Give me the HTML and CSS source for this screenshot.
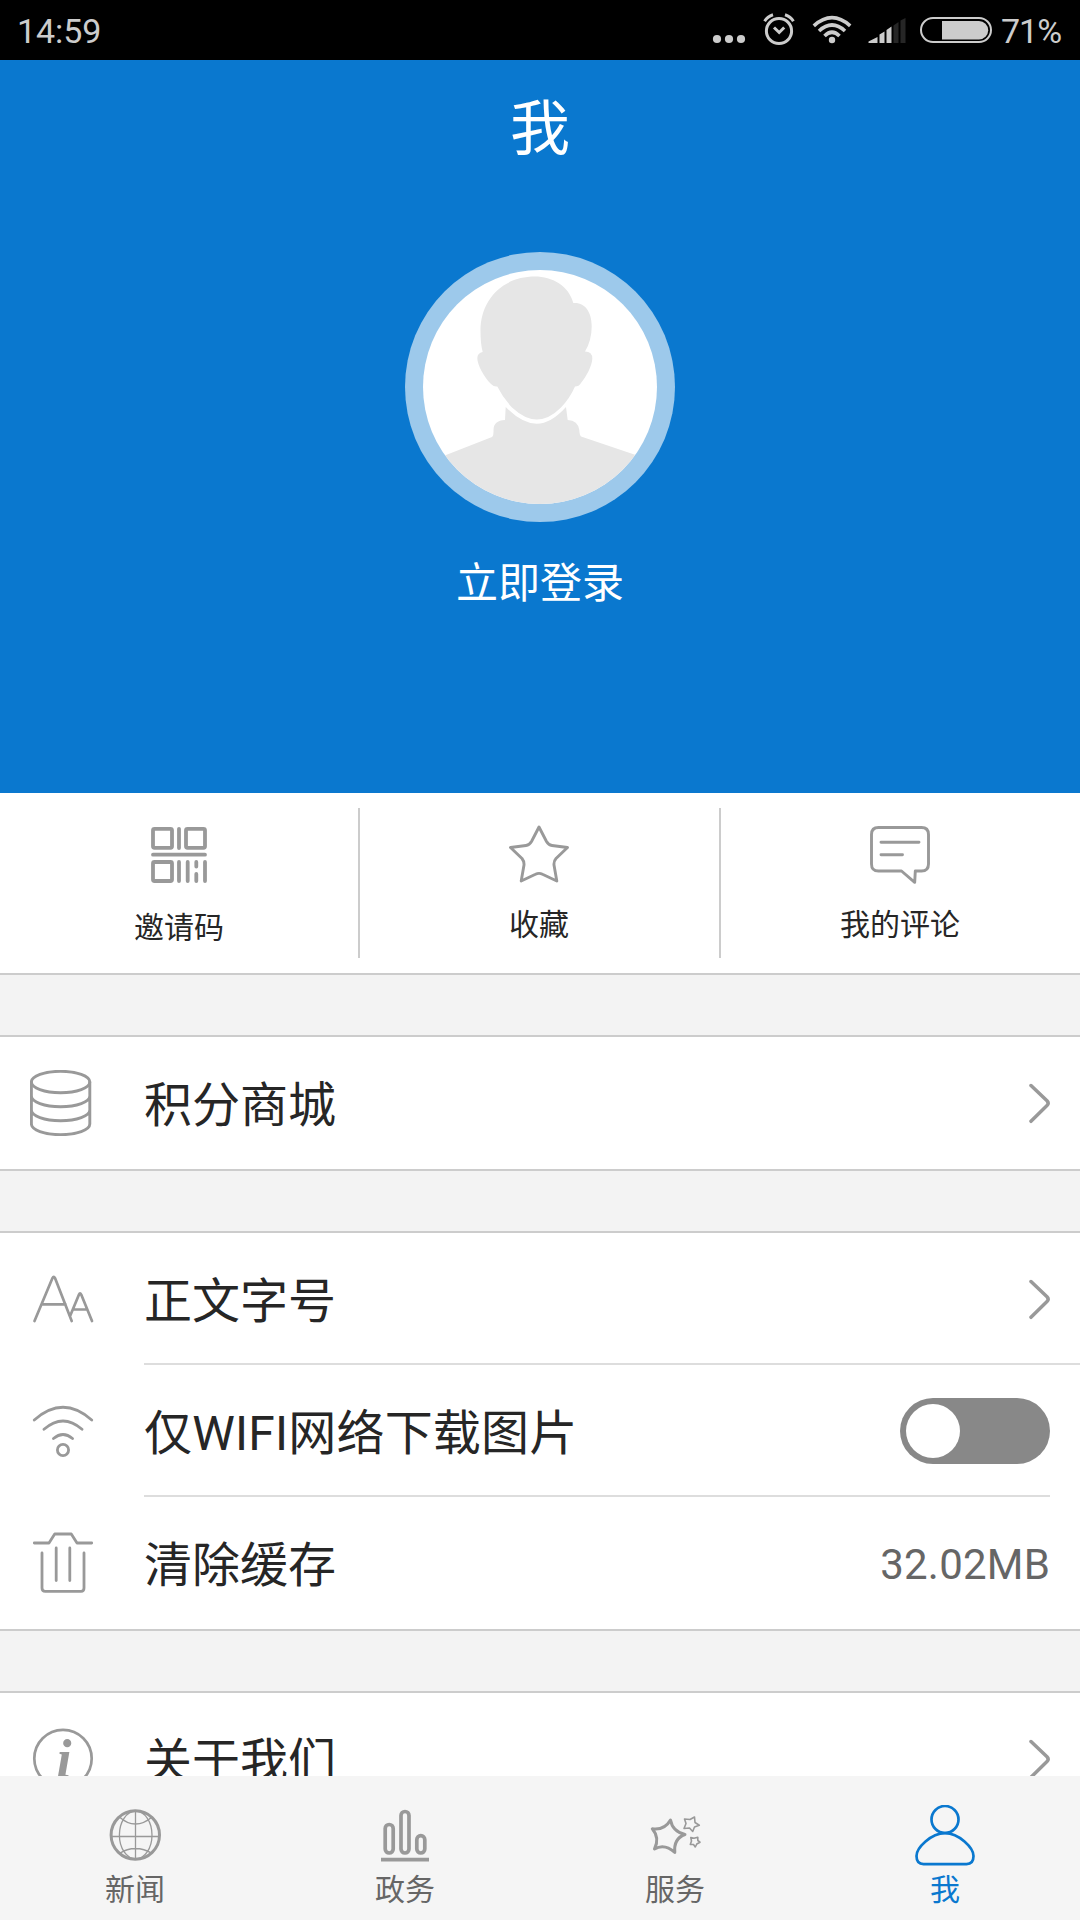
FILE: index.html
```html
<!DOCTYPE html>
<html lang="zh-CN">
<head>
<meta charset="utf-8">
<title>我</title>
<link rel="stylesheet" href="styles.css">
</head>
<body>
<div class="screen">
  <header class="status">
    <span class="time">14:59</span>
    <div class="status-icons">
      <svg width="34" height="60" viewBox="712 0 34 60" class="solid"><circle cx="717" cy="39" r="4.1"/><circle cx="729" cy="39" r="4.1"/><circle cx="741" cy="39" r="4.1"/></svg>
      <svg width="34" height="60" viewBox="762 0 34 60" class="line"><circle cx="779" cy="31" r="12.6"/><path d="M774 27.5l5.2 5 5-5M764.6 21.2Q767.5 16.500 773 14.800M793.400 21.200Q790.500 16.500 785 14.800"/></svg>
      <svg width="40" height="60" viewBox="812 0 40 60" class="line"><path d="M813.800 25.800Q832 9.500 850.200 25.800M819 31Q832 19 845 31M824.500 36Q832 28.500 839.500 36" stroke-width="3.600"/><circle cx="832" cy="40" r="3.200" fill="#ccc" stroke="none"/></svg>
      <svg width="38" height="60" viewBox="868.500 0 38 60" class="solid"><path d="M869 43v-1.500l9-4.500v6zM880 43V34.500l5-3V43zM887 43V30l5-3.500V43z"/><path d="M894 43V25.500l5-3.500V43zM901 43V20.500l5-2.500V43z" fill="#262626"/></svg>
      <svg width="74" height="60" viewBox="920 0 74 60" class="line"><rect x="922" y="18" width="70" height="24" rx="12" stroke-width="2"/><path d="M943 21h37a9.200 9.200 0 0 1 0 18.400h-37z" fill="#ccc" stroke="none"/></svg>
    </div>
    <span class="percent">71%</span>
  </header>

  <section class="profile">
    <h1 class="title">我</h1>
    <svg class="avatar" width="270" height="270" viewBox="0 0 270 270">
      <defs><clipPath id="face"><circle cx="135" cy="135" r="117"/></clipPath></defs>
      <circle cx="135" cy="135" r="135" fill="#9dc9eb"/>
      <circle cx="135" cy="135" r="117" fill="#fff"/>
      <g clip-path="url(#face)" fill="#e6e6e6">
        <path d="M130 24.600C98 24.600 75.500 47 75.500 79Q75.500 92 77.700 100Q72.500 101 72.300 106C72.300 113 79 125 86 132Q89 135 92.300 134.500Q98 146 107 155.500Q120 167.500 131.700 167.500Q144 167.500 156 155.500Q165 146 170 134.500Q174 134.500 176 131C181 125 187 114 187.300 107Q187.500 99.500 180 99.500Q186.800 88 186.700 74C186.700 60 180 50 168.300 51C164 34 147 24.600 130 24.600Z"/>
        <path d="M100.700 155L100 168Q88.500 168.500 88.500 178Q88.700 184 87 185L41 203L0 225V270H270V220L230 202.700L176 184.500Q174.500 183 174.300 178Q173 168.500 162.700 168L161 155Q146 171.700 131.700 171.700Q117 171.700 100.700 155Z"/>
      </g>
    </svg>
    <p class="login">立即登录</p>
  </section>

  <nav class="shortcuts">
    <a class="shortcut shortcut-low">
      <svg class="icon" width="60" height="60" viewBox="0 0 60 60" stroke-width="3.800"><rect x="4" y="4.800" width="19" height="19" rx="1.500"/><rect x="37" y="4.800" width="19" height="19" rx="1.500"/><rect x="4" y="38" width="19" height="19" rx="1.500"/><path d="M30 4.800V24M4 30.700H56M30 38V57M38.700 38V57M47.300 38v4.500M47.300 50v7M56 38V57"/></svg>
      <span>邀请码</span>
    </a>
    <i class="rule"></i>
    <a class="shortcut">
      <svg class="icon" width="60" height="60" viewBox="0 0 60 60" stroke-width="2.900"><path d="M30 3L37.500 17.500Q39.500 21 43 21.500L58.500 23.500L47 34.500Q44.700 37 45 41L47.800 57L33.500 50.300Q30 48.500 26.500 50.300L12.200 57L15 41Q15.300 37.500 13 34.500L1.500 23.500L17 21.500Q20.500 21 22.500 17.500Z"/></svg>
      <span>收藏</span>
    </a>
    <i class="rule"></i>
    <a class="shortcut">
      <svg class="icon" width="60" height="60" viewBox="0 0 60 60" stroke-width="2.900"><path d="M8.500 3.500H51.500Q58.500 3.500 58.500 10.500V40Q58.500 47 51.500 47H45.300L44.700 58.300L31.500 47H8.500Q1.500 47 1.500 40V10.500Q1.500 3.500 8.500 3.500ZM11 18.300H49M11 30.700H32.500"/></svg>
      <span>我的评论</span>
    </a>
  </nav>

  <section class="group">
    <div class="row">
      <svg class="icon" width="66" height="66" viewBox="0 0 66 66" stroke-width="2.900"><ellipse cx="30.600" cy="12" rx="29.200" ry="10.700"/><path d="M1.400 12V54A29.200 10.700 0 0 0 59.800 54V12M1.400 26A29.200 10.700 0 0 0 59.800 26M1.400 40A29.200 10.700 0 0 0 59.800 40"/></svg>
      <span class="label">积分商城</span>
      <svg class="icon" width="22" height="42" viewBox="0 0 22 42" stroke-width="3.500"><path d="M3 3.500L19 18.800Q21.300 21.300 19 23.500L3 39.300"/></svg>
    </div>
  </section>

  <section class="group">
    <div class="row row-mid">
      <svg class="icon" width="66" height="66" viewBox="0 0 66 66" stroke-width="2.700"><path d="M4.500 55L22.500 12Q23.700 9.500 25 12L41.700 55M11.500 38.300H35.500M40.300 49.500L49 28.500Q50 26 51.200 28.500L62 55M43.500 43.500H57"/></svg>
      <span class="label">正文字号</span>
      <svg class="icon" width="22" height="42" viewBox="0 0 22 42" stroke-width="3.500"><path d="M3 3.500L19 18.800Q21.300 21.300 19 23.500L3 39.300"/></svg>
    </div>
    <i class="divider"></i>
    <div class="row row-mid">
      <svg class="icon" width="66" height="66" viewBox="0 0 66 66" stroke-width="2.800"><path d="M4.300 22Q33 -3.400 61.700 22M14 31.300Q33 14.700 52 31.300M23.500 40.500Q33 32.500 42.500 40.500"/><circle cx="33" cy="52" r="5.600"/></svg>
      <span class="label label-wide">仅WIFI网络下载图片</span>
      <span class="toggle"></span>
    </div>
    <i class="divider divider-inset"></i>
    <div class="row">
      <svg class="icon" width="66" height="66" viewBox="0 0 66 66" stroke-width="2.800"><path d="M4.300 13H19L24.700 4H41.300L47 13H61.700M12 23V58Q12 61.300 15.300 61.300H51Q54 61.300 54 58V23M26.200 18V50.500M39.800 18V50.500"/></svg>
      <span class="label">清除缓存</span>
      <span class="value">32.02MB</span>
    </div>
  </section>

  <section class="group">
    <div class="row">
      <svg class="icon" width="66" height="66" viewBox="0 0 66 66" stroke-width="2.700"><circle cx="33" cy="32.500" r="28.700"/><text class="info" x="34" y="50.500" text-anchor="middle">i</text></svg>
      <span class="label">关于我们</span>
      <svg class="icon" width="22" height="42" viewBox="0 0 22 42" stroke-width="3.500"><path d="M3 3.500L19 18.800Q21.300 21.300 19 23.500L3 39.300"/></svg>
    </div>
  </section>

  <nav class="tabbar">
    <a class="tab">
      <svg class="icon" width="60" height="62" viewBox="0 0 60 62" stroke-width="1.300"><circle cx="30.300" cy="30" r="24.200" stroke-width="3"/><ellipse cx="30.700" cy="30" rx="16.300" ry="24"/><path d="M30.500 6V54M6 31.500H54M14.500 12Q22 19 30.500 19T47 12M14.500 48.500Q22 43.500 30.500 43.500T47 48.500"/></svg>
      <span>新闻</span>
    </a>
    <a class="tab">
      <svg class="icon" width="60" height="62" viewBox="0 0 60 62" stroke-width="3.700"><rect x="10.200" y="19.500" width="8" height="28.500" rx="4"/><rect x="26" y="6.500" width="8" height="41.500" rx="4"/><rect x="41.800" y="30.700" width="8" height="17.300" rx="4"/><path d="M6 54.700H54" stroke-linecap="butt"/></svg>
      <span>政务</span>
    </a>
    <a class="tab">
      <svg class="icon" width="60" height="62" viewBox="0 0 60 62" stroke-width="3"><path d="M25.500 15Q27.500 26.500 40 29.500Q28.500 33.500 29.800 47.500Q19.500 38 9.500 44Q15 33 7.300 23.800Q19.500 25.500 25.500 15Z"/><path d="M49.500 12L50 17.500L54.300 20.200L49.500 22L47.700 26.500L44.500 23L39 23.500L41 18.500L39.500 14L45 14.500ZM52.800 32.200V35.500L55 37.200L51.800 39L50.300 42L48.500 39.500L45.300 39.500L46.500 36L45.800 32.500L49 33.300Z" stroke-width="1.600"/></svg>
      <span>服务</span>
    </a>
    <a class="tab tab-active">
      <svg class="icon" width="60" height="62" viewBox="0 0 60 62" stroke-width="2.700"><circle cx="30" cy="14.500" r="13.500"/><path d="M8.500 59.100Q1.500 59.100 1.500 51C1.500 43 16 28.200 30 28.200S58.500 43 58.500 51Q58.500 59.100 51.500 59.100Z"/></svg>
      <span>我</span>
    </a>
  </nav>
</div>
</body>
</html>
```
FILE: styles.css
```css
* { box-sizing: border-box; }

body {
  margin: 0;
  font-family: Roboto, "Noto Sans CJK SC", sans-serif;
  color: #262626;
}

svg { display: block; flex: none; }

.screen {
  width: 1080px;
  height: 1920px;
  display: flex;
  flex-direction: column;
  overflow: hidden;
  background: #f3f3f3;
}

.screen > * { flex: none; }

/* Status bar */
.status {
  height: 60px;
  display: flex;
  align-items: center;
  padding: 0 18px 0 17px;
  background: #000;
  color: #ccc;
  font-size: 34px;
  line-height: 60px;
}

.time {
  padding-top: 2px;
  letter-spacing: -0.1px;
}

.status-icons {
  display: flex;
  gap: 16px;
  margin-left: auto;
}

.status-icons svg:last-child { margin-left: -3px; }

.percent {
  width: 61px;
  margin-left: 8px;
  padding-top: 2px;
  letter-spacing: -1px;
}

.solid { fill: #ccc; }

.line {
  fill: none;
  stroke: #ccc;
  stroke-width: 3;
}

/* Profile header */
.profile {
  height: 733px;
  display: flex;
  flex-direction: column;
  align-items: center;
  background: #0a78cf;
  color: #fff;
}

.title {
  margin: 0;
  height: 140px;
  line-height: 140px;
  font-size: 60px;
  font-weight: 400;
}

.avatar { margin-top: 52px; }

.login {
  margin: 32px 0 0;
  font-size: 42px;
  line-height: 60px;
}

/* Shortcuts */
.shortcuts {
  height: 182px;
  display: grid;
  grid-template-columns: 358px 2px 359px 2px 359px;
  align-items: center;
  background: #fff;
  border-bottom: 2px solid #ccc;
}

.shortcut {
  height: 100%;
  padding: 31px 1px 0 0;
  display: flex;
  flex-direction: column;
  align-items: center;
  gap: 21px;
  font-size: 30px;
  line-height: 40px;
}

.shortcut-low {
  padding-right: 0;
  gap: 24px;
}

.rule {
  width: 2px;
  height: 150px;
  background: #ccc;
}

.icon {
  fill: none;
  stroke: #999;
  stroke-linecap: round;
  stroke-linejoin: round;
}

/* Settings groups */
.group {
  margin-top: 60px;
  background: #fff;
  border-top: 2px solid #ccc;
  border-bottom: 2px solid #ccc;
}

.row {
  height: 132px;
  display: flex;
  align-items: center;
  padding: 0 30px;
}

.row-mid {
  height: 130px;
  padding-top: 2px;
}

.label {
  flex: 1;
  margin-left: 48px;
  padding-top: 5px;
  font-size: 48px;
  line-height: 64px;
}

.label-wide { letter-spacing: 0.2px; }

.divider {
  display: block;
  height: 2px;
  margin-left: 144px;
  background: #ddd;
}

.divider-inset { margin-right: 30px; }

.toggle {
  width: 150px;
  height: 66px;
  padding: 6px;
  border-radius: 33px;
  background: #888;
}

.toggle::before {
  content: "";
  display: block;
  width: 54px;
  height: 54px;
  border-radius: 50%;
  background: #fff;
}

.value {
  padding-top: 3px;
  font-size: 42px;
  line-height: 60px;
  letter-spacing: 0.2px;
  color: #666;
}

.info {
  font: italic bold 54px "Liberation Serif", serif;
  fill: #999;
  stroke: none;
}

.tabbar {
  position: absolute;
  top: 1776px;
  left: 0;
  width: 1080px;
  height: 144px;
  display: flex;
  background: #f5f5f5;
}

.tab {
  flex: 1;
  padding-top: 29px;
  display: flex;
  flex-direction: column;
  align-items: center;
  gap: 3px;
  font-size: 30px;
  line-height: 40px;
  color: #666;
}

.tab-active { color: #0a78cf; }
.tab-active .icon { stroke: #0a78cf; }
```
